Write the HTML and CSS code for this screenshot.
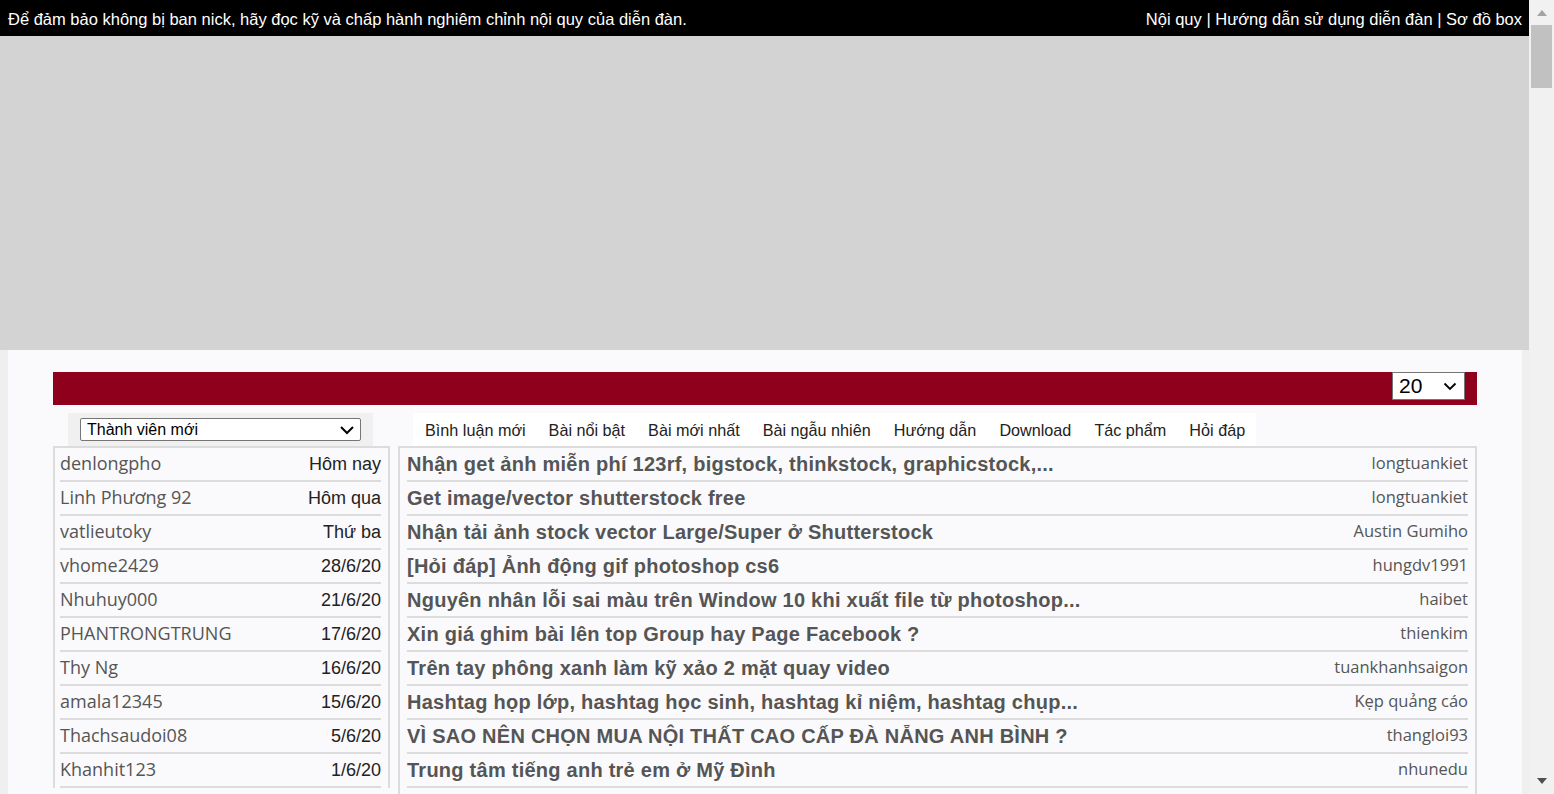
FILE: index.html
```html
<!DOCTYPE html>
<html lang="vi">
<head>
<meta charset="utf-8">
<title>Diễn đàn</title>
<link rel="stylesheet" href="styles.css">
</head>
<body>
<div class="page">
  <div class="topbar">
    <div class="notice">Để đảm bảo không bị ban nick, hãy đọc kỹ và chấp hành nghiêm chỉnh nội quy của diễn đàn.</div>
    <div class="toplinks"><a href="#">Nội quy</a> | <a href="#">Hướng dẫn sử dụng diễn đàn</a> | <a href="#">Sơ đồ box</a></div>
  </div>
  <div class="banner"></div>
  <div class="main">
    <div class="redbar">
      <div class="countsel"><span>20</span><svg width="14" height="9" viewBox="0 0 14 9"><path d="M1.5 1.5 L7 7 L12.5 1.5" fill="none" stroke="#000" stroke-width="1.8"/></svg></div>
    </div>
    <div class="cols">
      <div class="leftcol">
        <div class="lhead">
          <div class="msel"><span>Thành viên mới</span><svg width="16" height="10" viewBox="0 0 16 10"><path d="M2 2 L8 8 L14 2" fill="none" stroke="#000" stroke-width="2"/></svg></div>
        </div>
        <div class="lbox">
          <div class="lrow"><span class="nm">denlongpho</span><span class="dt">Hôm nay</span></div>
          <div class="lrow"><span class="nm">Linh Phương 92</span><span class="dt">Hôm qua</span></div>
          <div class="lrow"><span class="nm">vatlieutoky</span><span class="dt">Thứ ba</span></div>
          <div class="lrow"><span class="nm">vhome2429</span><span class="dt">28/6/20</span></div>
          <div class="lrow"><span class="nm">Nhuhuy000</span><span class="dt">21/6/20</span></div>
          <div class="lrow"><span class="nm">PHANTRONGTRUNG</span><span class="dt">17/6/20</span></div>
          <div class="lrow"><span class="nm">Thy Ng</span><span class="dt">16/6/20</span></div>
          <div class="lrow"><span class="nm">amala12345</span><span class="dt">15/6/20</span></div>
          <div class="lrow"><span class="nm">Thachsaudoi08</span><span class="dt">5/6/20</span></div>
          <div class="lrow"><span class="nm">Khanhit123</span><span class="dt">1/6/20</span></div>
        </div>
      </div>
      <div class="rightcol">
        <div class="tabs">
          <span>Bình luận mới</span><span>Bài nổi bật</span><span>Bài mới nhất</span><span>Bài ngẫu nhiên</span><span>Hướng dẫn</span><span>Download</span><span>Tác phẩm</span><span>Hỏi đáp</span>
        </div>
        <div class="rbox">
          <div class="rrow"><span class="tt">Nhận get ảnh miễn phí 123rf, bigstock, thinkstock, graphicstock,...</span><span class="au">longtuankiet</span></div>
          <div class="rrow"><span class="tt">Get image/vector shutterstock free</span><span class="au">longtuankiet</span></div>
          <div class="rrow"><span class="tt">Nhận tải ảnh stock vector Large/Super ở Shutterstock</span><span class="au">Austin Gumiho</span></div>
          <div class="rrow"><span class="tt">[Hỏi đáp] Ảnh động gif photoshop cs6</span><span class="au">hungdv1991</span></div>
          <div class="rrow"><span class="tt">Nguyên nhân lỗi sai màu trên Window 10 khi xuất file từ photoshop...</span><span class="au">haibet</span></div>
          <div class="rrow"><span class="tt">Xin giá ghim bài lên top Group hay Page Facebook ?</span><span class="au">thienkim</span></div>
          <div class="rrow"><span class="tt">Trên tay phông xanh làm kỹ xảo 2 mặt quay video</span><span class="au">tuankhanhsaigon</span></div>
          <div class="rrow"><span class="tt">Hashtag họp lớp, hashtag học sinh, hashtag kỉ niệm, hashtag chụp...</span><span class="au">Kẹp quảng cáo</span></div>
          <div class="rrow"><span class="tt">VÌ SAO NÊN CHỌN MUA NỘI THẤT CAO CẤP ĐÀ NẴNG ANH BÌNH ?</span><span class="au">thangloi93</span></div>
          <div class="rrow"><span class="tt">Trung tâm tiếng anh trẻ em ở Mỹ Đình</span><span class="au">nhunedu</span></div>
          <div class="rrow rrow-last"></div>
        </div>
      </div>
    </div>
  </div>
</div>
<div class="scrollbar">
  <div class="sb-up"></div>
  <div class="sb-thumb"></div>
  <div class="sb-track"></div>
  <div class="sb-down"></div>
</div>
</body>
</html>
```
FILE: styles.css
```css
html, body {
  margin: 0;
  height: 100%;
  overflow: hidden;
}
body {
  display: flex;
  background: #efefef;
  font-family: "Liberation Sans", Arial, sans-serif;
}
.page {
  flex: 1;
  min-width: 0;
  overflow: hidden;
}
.topbar {
  height: 36px;
  box-sizing: border-box;
  padding: 3px 7px 0 8px;
  background: #000;
  color: #fff;
  display: flex;
  justify-content: space-between;
  align-items: center;
  font-size: 16.5px;
}
.toplinks a {
  color: #fff;
  text-decoration: none;
}
.banner {
  height: 314px;
  background: #d3d3d3;
}
.main {
  margin: 0 7px 0 8px;
  background: #fafafc;
  padding: 22px 45px 40px;
}
.redbar {
  height: 33px;
  background: #8f001d;
  display: flex;
  justify-content: flex-end;
  align-items: flex-start;
  padding-right: 12px;
}
.countsel {
  width: 73px;
  height: 28px;
  box-sizing: border-box;
  background: #fff;
  border: 1px solid #767676;
  display: flex;
  align-items: center;
  justify-content: space-between;
  padding: 0 7px 0 6px;
  font-size: 21px;
  color: #000;
}
.cols {
  display: flex;
  gap: 8px;
  margin-top: 8px;
}
.leftcol {
  width: 337px;
  flex: none;
}
.rightcol {
  flex: 1;
  min-width: 0;
}
.lhead {
  margin: 0 17px 0 15px;
  height: 33px;
  background: #f0f0f0;
  padding: 5px 12px 0;
  box-sizing: border-box;
}
.msel {
  height: 23px;
  box-sizing: border-box;
  border: 1px solid #767676;
  border-radius: 2px;
  background: #fff;
  display: flex;
  align-items: center;
  justify-content: space-between;
  padding: 1px 5px 0 6px;
  font-size: 16px;
  color: #000;
}
.lbox, .rbox {
  border: 2px solid #dcdcdc;
  border-bottom: none;
  padding: 0 7px;
}
.lbox {
  padding: 0 7px 0 5px;
}
.lrow, .rrow {
  height: 32px;
  border-bottom: 2px solid #dcdcdc;
  display: flex;
  justify-content: space-between;
  align-items: center;
  white-space: nowrap;
}
.nm {
  font-family: "Open Sans", sans-serif;
  font-size: 18px;
  color: #555;
  padding-bottom: 2px;
}
.dt {
  font-size: 18px;
  color: #222;
}
.tabs {
  margin-left: 15px;
  width: 843px;
  height: 33px;
  background: #fff;
  display: flex;
  align-items: center;
  gap: 23px;
  padding: 1px 0 0 12px;
  box-sizing: border-box;
  font-size: 16.2px;
  color: #222;
  white-space: nowrap;
}
.tt {
  font-weight: bold;
  font-size: 20px;
  letter-spacing: 0.25px;
  color: #555;
}
.au {
  font-family: "Open Sans", sans-serif;
  font-size: 16.5px;
  color: #555;
  padding-bottom: 3px;
}
.scrollbar {
  width: 25px;
  flex: none;
  background: #f1f1f1;
  display: flex;
  flex-direction: column;
  align-items: center;
}
.sb-up {
  margin-top: 10px;
  width: 0;
  height: 0;
  border-left: 5.5px solid transparent;
  border-right: 5.5px solid transparent;
  border-bottom: 6px solid #a3a3a3;
}
.sb-thumb {
  margin-top: 9px;
  width: 21px;
  height: 63px;
  background: #c1c1c1;
}
.sb-track {
  flex: 1;
}
.sb-down {
  margin-bottom: 10px;
  width: 0;
  height: 0;
  border-left: 5.5px solid transparent;
  border-right: 5.5px solid transparent;
  border-top: 6px solid #505050;
}
```
